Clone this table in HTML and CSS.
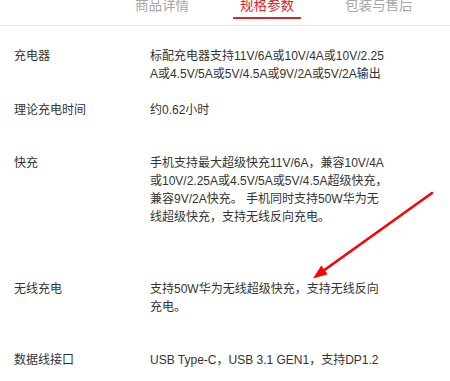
FILE: index.html
```html
<!DOCTYPE html>
<html lang="zh-CN">
<head>
<meta charset="utf-8">
<title>规格参数</title>
<link rel="stylesheet" href="styles.css">
</head>
<body>
<div class="page">
  <nav class="tabs">
    <a class="tab">商品详情</a>
    <a class="tab tab--active">规格参数</a>
    <a class="tab">包装与售后</a>
  </nav>
  <div class="specs">
    <div class="row">
      <div class="label">充电器</div>
      <div class="value">标配充电器支持11V/6A或10V/4A或10V/2.25A或4.5V/5A或5V/4.5A或9V/2A或5V/2A输出</div>
    </div>
    <div class="row row--gap1">
      <div class="label">理论充电时间</div>
      <div class="value">约0.62小时</div>
    </div>
    <div class="row row--gap2">
      <div class="label">快充</div>
      <div class="value">手机支持最大超级快充11V/6A，兼容10V/4A或10V/2.25A或4.5V/5A或5V/4.5A超级快充，兼容9V/2A快充。 手机同时支持50W华为无线超级快充，支持无线反向充电。</div>
    </div>
    <div class="row row--gap1">
      <div class="label">无线充电</div>
      <div class="value">支持50W华为无线超级快充，支持无线反向充电。</div>
    </div>
    <div class="row">
      <div class="label">数据线接口</div>
      <div class="value">USB Type-C，USB 3.1 GEN1，支持DP1.2</div>
    </div>
  </div>
  <svg class="annotation" width="450" height="381" viewBox="0 0 450 381" aria-hidden="true">
    <line x1="432" y1="193" x2="323" y2="271" stroke="#ff0000" stroke-width="2.6" stroke-linecap="round"/>
    <polygon points="313,278.5 327.6,274.3 321.3,265.5" fill="#ff0000"/>
  </svg>
</div>
</body>
</html>
```

FILE: styles.css
```css
html, body {
  margin: 0;
  padding: 0;
  background: #ffffff;
}

.page {
  position: relative;
  width: 450px;
  height: 381px;
  overflow: hidden;
  font-family: "Liberation Sans", "Noto Sans CJK SC", sans-serif;
  color: #333333;
}

.tabs {
  display: flex;
  gap: 37px;
  margin-top: -4px;
  padding: 0 0 6px 128px;
  border-bottom: 1px solid #e6e6e6;
}

.tab {
  font-size: 13.5px;
  line-height: 20px;
  padding: 0 7px 1px;
  border-bottom: 2px solid transparent;
  color: #a6a6a6;
  white-space: nowrap;
}

.tab--active {
  color: #d9262e;
  border-bottom-color: #d9262e;
}

.specs {
  padding-top: 12px;
}

.row {
  display: flex;
  padding: 9px 0;
  font-size: 12px;
  line-height: 18px;
}

.row--gap1 {
  padding-bottom: 26px;
}

.row--gap2 {
  padding-bottom: 45px;
}

.label {
  width: 136px;
  padding-left: 14px;
  flex: none;
}

.value {
  width: 239px;
  word-break: break-all;
}

.annotation {
  position: absolute;
  top: 0;
  left: 0;
}
```
